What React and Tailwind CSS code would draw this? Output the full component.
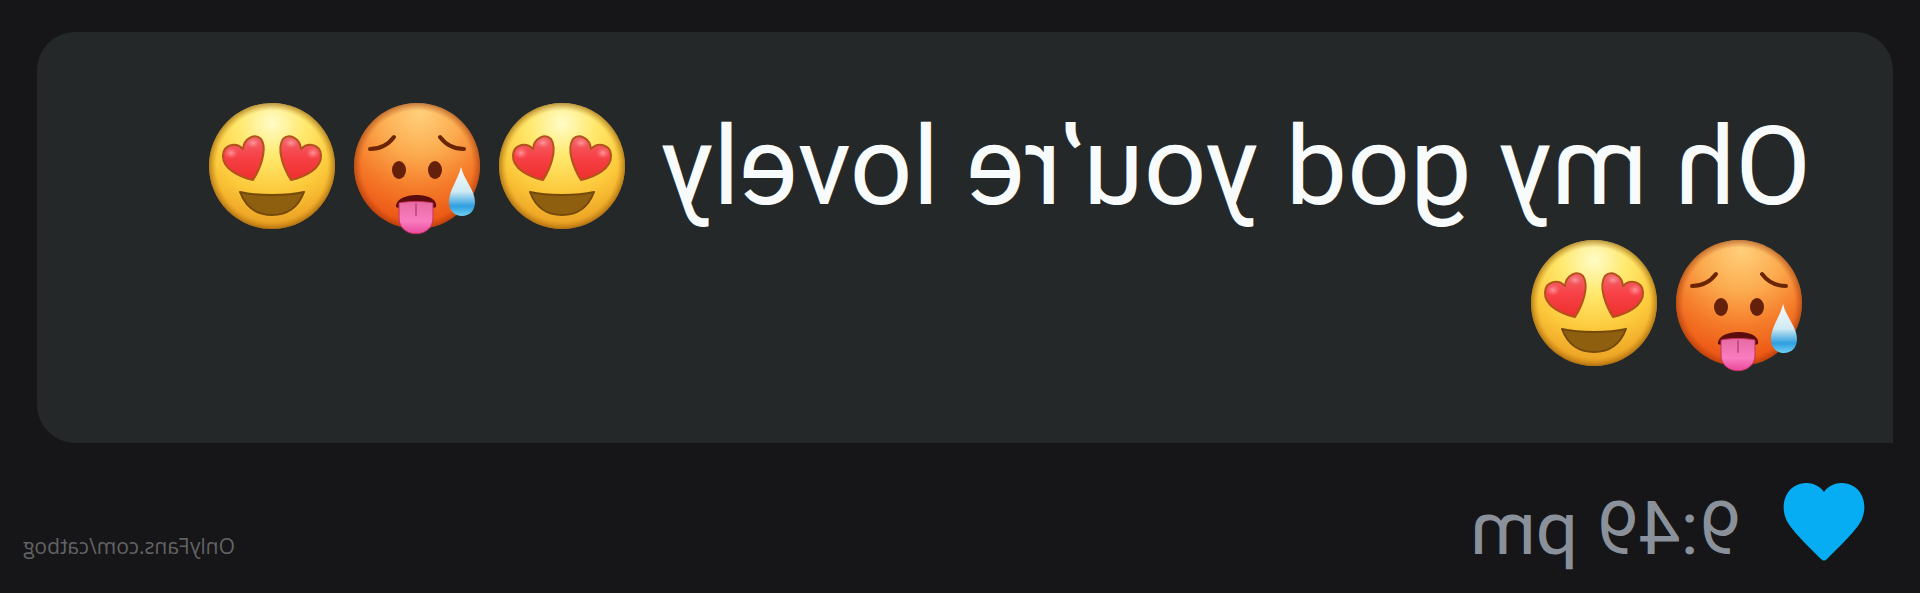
const HeartEyes = () => (
  <svg
    role="img"
    aria-label="smiling face with heart eyes"
    viewBox="-72 -68 145 137"
    className="inline-block h-[137px] w-[145px] align-top"
  >
    <defs>
      <radialGradient id="love-face" cx="50%" cy="16%" r="86%">
        <stop offset="0" stopColor="#fffcc8" />
        <stop offset="0.3" stopColor="#ffe96e" />
        <stop offset="0.65" stopColor="#fcc83a" />
        <stop offset="1" stopColor="#e8981e" />
      </radialGradient>
      <radialGradient id="love-rim" cx="50%" cy="50%" r="50%">
        <stop offset="0.88" stopColor="#b8790c" stopOpacity="0" />
        <stop offset="1" stopColor="#8a5408" stopOpacity="0.6" />
      </radialGradient>
      <linearGradient id="love-heart" x1="0" y1="0" x2="0" y2="1">
        <stop offset="0" stopColor="#f0686c" />
        <stop offset="0.45" stopColor="#f74248" />
        <stop offset="1" stopColor="#ee2f2c" />
      </linearGradient>
      <radialGradient id="love-shine">
        <stop offset="0" stopColor="#ffa9ad" stopOpacity="0.8" />
        <stop offset="1" stopColor="#ff8085" stopOpacity="0" />
      </radialGradient>
      <g id="love-eye">
        <path
          d="M-19 14C-32 11-50 3-49-11C-48-22-36-24-29-17C-28-28-17-33-11-27C-4-17-12 3-19 14Z"
          fill="url(#love-heart)"
          stroke="#b3521a"
          strokeWidth="2"
          strokeLinejoin="round"
        />
        <ellipse cx="-41" cy="-13" rx="7" ry="6" fill="url(#love-shine)" />
        <ellipse cx="-19" cy="-23" rx="7" ry="5" fill="url(#love-shine)" />
      </g>
    </defs>
    <circle r="63" fill="url(#love-face)" />
    <circle r="63" fill="url(#love-rim)" />
    <use href="#love-eye" />
    <use href="#love-eye" transform="scale(-1 1)" />
    <path
      d="M-32 26C-15 30 15 30 32 26C26 42 14 49 0 49C-14 49-26 42-32 26Z"
      fill="#8f5f10"
      stroke="#75490a"
      strokeWidth="2"
      strokeLinejoin="round"
    />
  </svg>
);

const HotFace = () => (
  <svg
    role="img"
    aria-label="hot face"
    viewBox="-72 -68 145 137"
    className="inline-block h-[137px] w-[145px] align-top"
  >
    <defs>
      <radialGradient id="hot-face" cx="48%" cy="8%" r="92%">
        <stop offset="0" stopColor="#ffcf7a" />
        <stop offset="0.35" stopColor="#fcac50" />
        <stop offset="0.65" stopColor="#f57c2a" />
        <stop offset="1" stopColor="#ea4e10" />
      </radialGradient>
      <radialGradient id="hot-rim" cx="50%" cy="50%" r="50%">
        <stop offset="0.88" stopColor="#a83a08" stopOpacity="0" />
        <stop offset="1" stopColor="#8a2e08" stopOpacity="0.5" />
      </radialGradient>
      <linearGradient id="hot-tongue" x1="0" y1="0" x2="0" y2="1">
        <stop offset="0" stopColor="#e66ba2" />
        <stop offset="0.6" stopColor="#fa7cc0" />
        <stop offset="1" stopColor="#e94a9c" />
      </linearGradient>
      <linearGradient id="hot-drop" x1="0" y1="0" x2="0" y2="1">
        <stop offset="0" stopColor="#f6fbfc" />
        <stop offset="0.5" stopColor="#cfeaf3" />
        <stop offset="0.8" stopColor="#2f9fe0" />
        <stop offset="1" stopColor="#6fd0f2" />
      </linearGradient>
    </defs>
    <circle r="63" fill="url(#hot-face)" />
    <circle r="63" fill="url(#hot-rim)" />
    <g fill="none" stroke="#6b2505" strokeWidth="4" strokeLinecap="round">
      <path d="M-47-17C-37-17-29-21-23-29" />
      <path d="M47-17C37-17 29-21 23-29" />
    </g>
    <ellipse cx="-18" cy="4" rx="7" ry="9" fill="#64200a" />
    <ellipse cx="18" cy="4" rx="7" ry="9" fill="#64200a" />
    <path d="M-19 41C-22 25 22 25 21 41C20 43-18 43-19 41Z" fill="#5a0d0c" />
    <path
      d="M-16 37C-8 35 10 35 18 37V52C18 73-16 73-16 52Z"
      fill="url(#hot-tongue)"
      stroke="#c9305f"
      strokeWidth="1"
    />
    <path d="M1 38V49" stroke="#c4508a" strokeWidth="2" strokeLinecap="round" />
    <path
      d="M-44 1C-41 14-32 24-32 36C-32 45-38 50-45 50C-52 50-58 45-58 36C-58 24-47 14-44 1Z"
      fill="url(#hot-drop)"
    />
  </svg>
);

const BlueHeart = () => (
  <svg
    role="img"
    aria-label="blue heart"
    viewBox="0 0 82 78"
    className="h-[78px] w-[82px] shrink-0 self-center"
  >
    <path
      d="M41 9C48-1 61-2 70 3C81 9 84 24 79 36C75 46 56 64 44 76Q41 79 38 76C26 64 7 46 3 36C-2 24 1 9 12 3C21-2 34-1 41 9Z"
      fill="#06adf2"
    />
  </svg>
);

export default function App() {
  return (
    // The whole conversation is shown flipped left to right
    <main className="min-h-screen -scale-x-100 bg-[#161618] pt-8 pr-[37px] pl-[27px] font-['Roboto',sans-serif]">
      <p className="rounded-[38px] rounded-bl-none bg-[#242828] px-[82px] pt-[66px] pb-[71px] text-[110px] leading-[137px] text-[#f8fbfb]">
        Oh my god you’re lovely <HeartEyes />
        <HotFace />
        <HeartEyes />
        <HotFace />
        <HeartEyes />
      </p>

      <footer className="flex items-baseline gap-[42px] pt-[34px] pl-7">
        <BlueHeart />
        <time className="pt-3 text-[75px] leading-[78px] text-[#8a919b]">9:49 pm</time>
        <a
          href="#profile"
          className="-mr-[14px] ml-auto font-['Open_Sans',sans-serif] text-[21px] text-[#626264]"
        >
          OnlyFans.com/catbog
        </a>
      </footer>
    </main>
  );
}
